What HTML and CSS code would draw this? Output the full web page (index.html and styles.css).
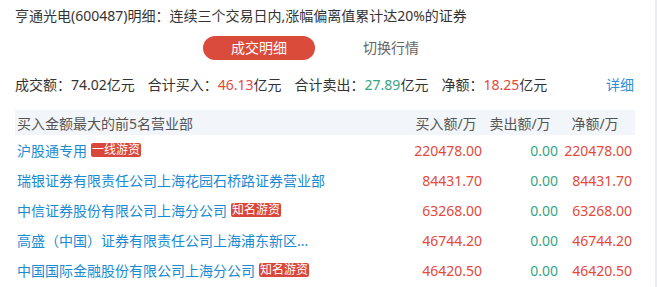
FILE: index.html
```html
<!DOCTYPE html>
<html lang="zh-CN">
<head>
<meta charset="utf-8">
<link rel="stylesheet" href="styles.css">
</head>
<body>
<div class="page">
  <main class="panel">
    <h1 class="title">亨通光电(600487)明细：连续三个交易日内,涨幅偏离值累计达20%的证券</h1>
    <div class="tabs">
      <span class="tab active">成交明细</span>
      <span class="tab">切换行情</span>
    </div>
    <div class="summary">
      <span class="item">成交额：74.02亿元</span>
      <span class="item">合计买入：<em class="up">46.13</em>亿元</span>
      <span class="item">合计卖出：<em class="down">27.89</em>亿元</span>
      <span class="item">净额：<em class="up">18.25</em>亿元</span>
      <a class="more">详细</a>
    </div>
    <div class="table">
      <div class="row head">
        <span class="name">买入金额最大的前5名营业部</span>
        <span class="num">买入额/万</span>
        <span class="num">卖出额/万</span>
        <span class="num">净额/万</span>
      </div>
      <div class="row">
        <span class="name"><span class="link">沪股通专用</span><span class="tag">一线游资</span></span>
        <span class="num up">220478.00</span>
        <span class="num down">0.00</span>
        <span class="num up">220478.00</span>
      </div>
      <div class="row">
        <span class="name"><span class="link">瑞银证券有限责任公司上海花园石桥路证券营业部</span></span>
        <span class="num up">84431.70</span>
        <span class="num down">0.00</span>
        <span class="num up">84431.70</span>
      </div>
      <div class="row">
        <span class="name"><span class="link">中信证券股份有限公司上海分公司</span><span class="tag">知名游资</span></span>
        <span class="num up">63268.00</span>
        <span class="num down">0.00</span>
        <span class="num up">63268.00</span>
      </div>
      <div class="row">
        <span class="name"><span class="link">高盛（中国）证券有限责任公司上海浦东新区...</span></span>
        <span class="num up">46744.20</span>
        <span class="num down">0.00</span>
        <span class="num up">46744.20</span>
      </div>
      <div class="row">
        <span class="name"><span class="link">中国国际金融股份有限公司上海分公司</span><span class="tag">知名游资</span></span>
        <span class="num up">46420.50</span>
        <span class="num down">0.00</span>
        <span class="num up">46420.50</span>
      </div>
    </div>
  </main>
  <div class="edge"></div>
</div>
</body>
</html>
```
FILE: styles.css
```css
* { box-sizing: border-box; }
html, body { margin: 0; padding: 0; background: #fff; }
body {
  font-family: "Noto Sans", "Noto Sans CJK SC", sans-serif;
  font-size: 14px;
  color: #333;
}
.page { display: flex; width: 657px; height: 287px; overflow: hidden; }
.panel { width: 655px; padding: 6px 20px 0 15px; }
.edge { width: 2px; background: #e9edf2; }
.title {
  margin: 0;
  font-size: 14px;
  font-weight: normal;
  line-height: 20px;
  color: #333;
  white-space: nowrap;
}
.tabs {
  display: flex;
  justify-content: center;
  gap: 20px;
  margin-top: 10px;
}
.tab {
  width: 112px;
  height: 24px;
  line-height: 24px;
  text-align: center;
  border-radius: 12px;
  color: #666;
  font-size: 14px;
}
.tab.active { background: #da4b3b; color: #fff; }
.summary {
  display: flex;
  align-items: center;
  gap: 13px;
  margin-top: 15px;
  line-height: 20px;
  white-space: nowrap;
}
.summary em { font-style: normal; }
.more { margin-left: auto; color: #2a90d8; margin-right: 1px; }
.up { color: #e4493b; }
.down { color: #36a583; }
.table { margin-top: 15px; }
.row {
  display: grid;
  grid-template-columns: 1fr 72px 76px 74px;
  align-items: center;
  height: 30px;
  padding: 0 3px 0 2px;
  white-space: nowrap;
}
.row.head { height: 25px; background: #f2f5f9; color: #555; }
.row.head .num { text-align: center; }
.num { text-align: right; }
.name { display: flex; align-items: center; }
.link { color: #1a8bd2; }
.tag {
  margin-left: 4px;
  padding: 0 1px;
  height: 14px;
  line-height: 14px;
  font-size: 12px;
  background: #d9473a;
  color: #fff;
  border-radius: 2px;
}
```
